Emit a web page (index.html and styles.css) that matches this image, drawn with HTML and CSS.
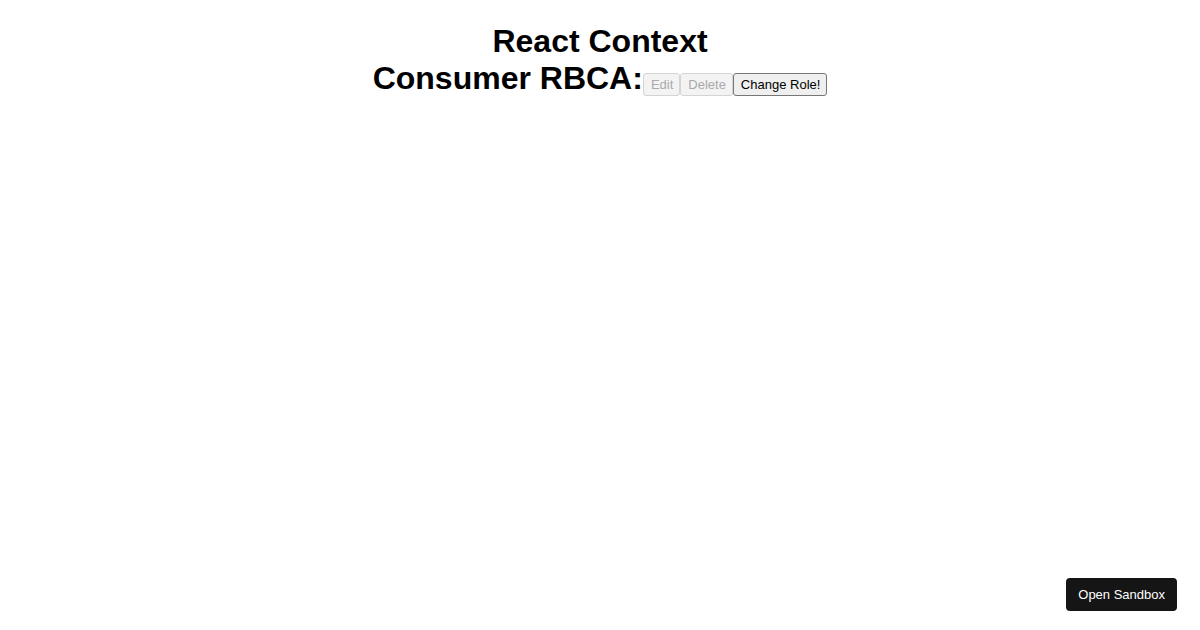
FILE: index.html
```html
<!DOCTYPE html>
<html lang="en">
<head>
    <meta charset="UTF-8">
    <meta name="viewport" content="width=device-width, initial-scale=1.0">
    <title>React Context RBCA</title>
    <link rel="stylesheet" href="styles.css">
</head>
<body>
    <div class="app">
        <h1 class="title">React Context<br>Consumer RBCA:<button class="role-btn" disabled>Edit</button><button class="role-btn" disabled>Delete</button><button class="role-btn">Change Role!</button></h1>
    </div>

    <a class="sandbox-link" href="#">Open Sandbox</a>
</body>
</html>
```

FILE: styles.css
```css
body {
    margin: 8px;
    font-family: "Liberation Sans", Arial, sans-serif;
    background: #fff;
    color: #000;
}

.app {
    text-align: center;
}

.title {
    font-size: 32px;
    font-weight: bold;
    margin: 15px 0 21px;
}

.role-btn {
    font-family: "Liberation Sans", Arial, sans-serif;
    font-size: 13px;
    line-height: 15px;
    font-weight: normal;
    color: #000;
    background-color: #efefef;
    border: 1px solid #767676;
    border-radius: 3px;
    padding: 3px 6px 3px 7px;
    margin: 0;
    vertical-align: baseline;
}

.role-btn:disabled {
    color: #a9a9a9;
    background-color: #f3f3f3;
    border-color: #d4d4d4;
}

.sandbox-link {
    position: fixed;
    right: 23px;
    bottom: 19px;
    background: #151515;
    color: #fff;
    font-size: 13px;
    text-decoration: none;
    padding: 9px 12px;
    border-radius: 4px;
    line-height: 15px;
}
```
